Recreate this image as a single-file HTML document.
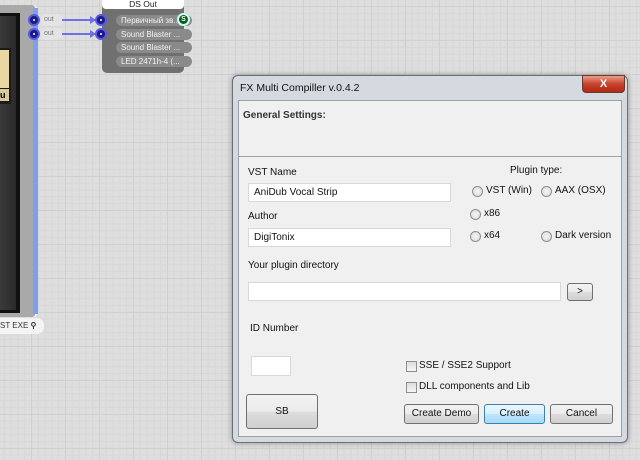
<!DOCTYPE html>
<html><head><meta charset="utf-8"><style>
*{margin:0;padding:0;box-sizing:border-box}
body{width:640px;height:460px;overflow:hidden;position:relative;font-family:"Liberation Sans","Noto Sans CJK SC",sans-serif;font-size:11px;
background-color:#dedede;
background-image:linear-gradient(#d0d0d0 1px,transparent 1px),linear-gradient(90deg,#d0d0d0 1px,transparent 1px),linear-gradient(#d7d7d7 1px,transparent 1px),linear-gradient(90deg,#d7d7d7 1px,transparent 1px);
background-size:34px 34px,34px 34px,6.8px 6.8px,6.8px 6.8px;background-position:-3px 6px,-3px 6px,-3px 6px,-3px 6px}
.a{position:absolute}
.port{position:absolute;width:12px;height:12px;border-radius:50%;background:#1a1a8a;border:2px solid #5a5ae0}
.port:after{content:"";position:absolute;left:3px;top:3px;width:2px;height:2px;background:#fff;border-radius:50%}
.pill{position:absolute;background:#8a8a8a;color:#f2f2f2;border-radius:6px;height:11px;font-size:8px;line-height:11px;padding-left:5px;width:76px}
.win{font-family:"Liberation Sans",sans-serif;font-size:10px;color:#111}
.inp{position:absolute;background:#fff;border:1px solid #d8d8d8;height:19px;padding-left:5px;line-height:17px;font-size:10px}
.rad{position:absolute;width:11px;height:11px;border-radius:50%;border:1px solid #8e8f8f;background:radial-gradient(#f4f4f4,#d9d9d9)}
.chk{position:absolute;width:11px;height:11px;border:1px solid #8e8f8f;background:linear-gradient(#dedede,#f6f6f6)}
.btn{position:absolute;border:1px solid #707070;border-radius:3px;background:linear-gradient(#f2f2f2 0%,#ebebeb 50%,#dddddd 51%,#cfcfcf 100%);text-align:center;font-size:10px}
</style></head><body>
<div class="a" style="left:-10px;top:5px;width:48px;height:312px;background:#a9a9a9;border-radius:6px;border-right:2px solid #fff"></div>
<div class="a" style="left:33px;top:8px;width:5px;height:306px;background:#7f9ef0"></div>
<div class="a" style="left:0;top:13px;width:20px;height:300px;background:#111"></div>
<div class="a" style="left:0;top:16px;width:16px;height:294px;background:linear-gradient(90deg,#3a3a3a,#2a2a2a)"></div>
<div class="a" style="left:0;top:48px;width:11px;height:56px;background:#1a1a1a"></div>
<div class="a" style="left:0;top:50px;width:9px;height:38px;background:#e9d6a2"></div>
<div class="a" style="left:0;top:89px;width:9px;height:12px;background:#d8c99c;font-size:9px;font-weight:bold;line-height:12px">u</div>
<div class="a" style="left:0;top:318px;width:44px;height:16px;background:#f4f4f4;border-radius:0 7px 7px 0;font-size:8px;line-height:16px;color:#333">ST EXE <b>&#9906;</b></div>
<div class="port" style="left:28px;top:14px"></div>
<div class="port" style="left:28px;top:28px"></div>
<div class="a" style="left:41px;top:14px;width:22px;height:12px;background:#e4e4e4;border-radius:6px;font-size:7px;color:#777;line-height:12px;padding-left:3px">out</div>
<div class="a" style="left:41px;top:28px;width:22px;height:12px;background:#e4e4e4;border-radius:6px;font-size:7px;color:#777;line-height:12px;padding-left:3px">out</div>
<div class="a" style="left:62px;top:19px;width:34px;height:2px;background:#6f6fe8"></div>
<div class="a" style="left:62px;top:33px;width:34px;height:2px;background:#6f6fe8"></div>
<div class="a" style="left:90px;top:16px;border-left:6px solid #6f6fe8;border-top:4px solid transparent;border-bottom:4px solid transparent"></div>
<div class="a" style="left:90px;top:30px;border-left:6px solid #6f6fe8;border-top:4px solid transparent;border-bottom:4px solid transparent"></div>
<div class="a" style="left:102px;top:0;width:82px;height:73px;background:#707070;border-radius:0 0 5px 5px"></div>
<div class="a" style="left:102px;top:-4px;width:82px;height:13px;background:#fff;border-radius:4px;text-align:center;font-size:8.5px;line-height:16px;color:#222">DS Out</div>
<div class="port" style="left:95px;top:14px"></div>
<div class="port" style="left:95px;top:28px"></div>
<div class="pill" style="left:116px;top:15px">Первичный зв...</div>
<div class="pill" style="left:116px;top:29px">Sound Blaster ...</div>
<div class="pill" style="left:116px;top:42px">Sound Blaster ...</div>
<div class="pill" style="left:116px;top:56px">LED 2471h-4 (...</div>
<div class="a" style="left:177px;top:13px;width:13px;height:13px;border-radius:50%;background:#0a5a1a;border:2px solid #cfe;color:#fff;font-size:7px;font-weight:bold;text-align:center;line-height:9px">S</div>
<div class="win">
<div class="a" style="left:232px;top:75px;width:396px;height:368px;background:#d5dae0;border:1px solid #6a6f78;border-radius:6px;box-shadow:0 0 6px rgba(0,0,0,.35)"></div>
<div class="a" style="left:240px;top:82px;font-size:10.5px">FX Multi Compiller v.0.4.2</div>
<div class="a" style="left:582px;top:75px;width:43px;height:18px;background:linear-gradient(#e8a08c,#c8412b 50%,#b02a16);border:1px solid #6a3a30;border-radius:0 0 4px 4px;color:#fff;font-weight:bold;text-align:center;font-size:11px;line-height:16px">X</div>
<div class="a" style="left:238px;top:100px;width:384px;height:337px;background:#f0f0f0;border:1px solid #9aa0a8"></div>
<div class="a" style="left:239px;top:156px;width:382px;height:1px;background:#a0a0a0"></div>
<div class="a" style="left:243px;top:110px;font-weight:bold;color:#333">General Settings:</div>
<div class="a" style="left:248px;top:167px">VST Name</div>
<div class="inp" style="left:248px;top:183px;width:203px">AniDub Vocal Strip</div>
<div class="a" style="left:248px;top:211px">Author</div>
<div class="inp" style="left:248px;top:228px;width:203px">DigiTonix</div>
<div class="a" style="left:248px;top:260px">Your plugin directory</div>
<div class="inp" style="left:248px;top:282px;width:313px"></div>
<div class="btn" style="left:567px;top:283px;width:26px;height:18px;line-height:16px">&gt;</div>
<div class="a" style="left:250px;top:323px">ID Number</div>
<div class="inp" style="left:251px;top:356px;width:40px;height:20px"></div>
<div class="btn" style="left:246px;top:394px;width:72px;height:35px;line-height:33px">SB</div>
<div class="a" style="left:510px;top:165px">Plugin type:</div>
<div class="rad" style="left:472px;top:186px"></div><div class="a" style="left:486px;top:185px">VST (Win)</div>
<div class="rad" style="left:541px;top:186px"></div><div class="a" style="left:555px;top:185px">AAX (OSX)</div>
<div class="rad" style="left:470px;top:209px"></div><div class="a" style="left:484px;top:208px">x86</div>
<div class="rad" style="left:470px;top:231px"></div><div class="a" style="left:484px;top:230px">x64</div>
<div class="rad" style="left:541px;top:231px"></div><div class="a" style="left:555px;top:230px">Dark version</div>
<div class="chk" style="left:406px;top:361px"></div><div class="a" style="left:419px;top:360px">SSE / SSE2 Support</div>
<div class="chk" style="left:406px;top:382px"></div><div class="a" style="left:419px;top:381px">DLL components and Lib</div>
<div class="btn" style="left:404px;top:404px;width:75px;height:20px;line-height:18px">Create Demo</div>
<div class="btn" style="left:484px;top:404px;width:61px;height:20px;line-height:18px;border-color:#3c7fb1;background:linear-gradient(#eaf6fd,#d9f0fc 50%,#bee6fd 51%,#a7d9f5)">Create</div>
<div class="btn" style="left:550px;top:404px;width:63px;height:20px;line-height:18px">Cancel</div>
</div>
</body></html>
